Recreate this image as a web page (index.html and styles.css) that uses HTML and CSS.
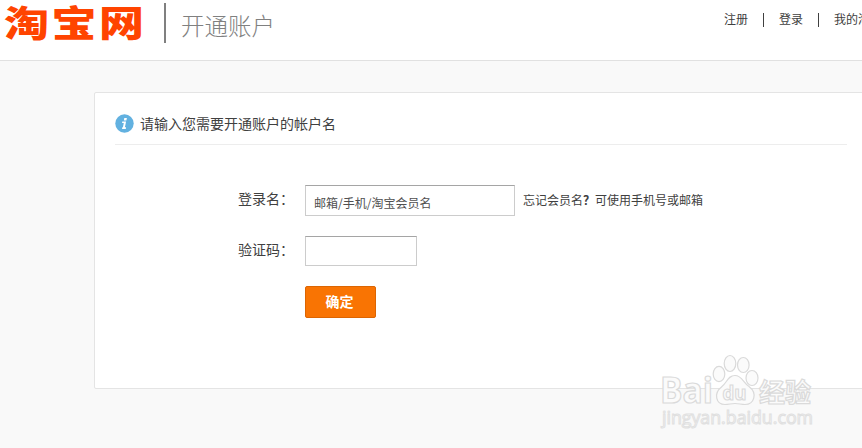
FILE: index.html
```html
<!DOCTYPE html>
<html lang="zh-CN">
<head>
    <meta charset="UTF-8">
    <title>开通账户</title>
    <link rel="stylesheet" href="styles.css">
</head>
<body>

    <!-- Header -->
    <div class="header">
        <svg class="logo" width="164" height="46" viewBox="0 0 164 46">
            <g transform="translate(4 36.5) scale(1.25 1)">
                <text x="0" y="0" textLength="112">淘宝网</text>
            </g>
        </svg>
        <h1 class="title">开通账户</h1>
        <ul class="site-nav">
            <li><a href="#">注册</a></li>
            <li><a href="#">登录</a></li>
            <li><a href="#">我的淘宝</a></li>
        </ul>
    </div>

    <!-- Account form -->
    <div class="panel">
        <div class="panel-title">
            <svg class="info" width="19" height="19" viewBox="0 0 19 19">
                <circle cx="9.5" cy="9.5" r="9.2" fill="#62b1e0"/>
                <path d="M9.3 4h2.6l-.5 2.4H8.8zM7.3 7.4h3.8L9.9 13.3h1.2l-.3 1.6H7l.3-1.6h.6L8.8 9H7z" fill="#fff"/>
            </svg>
            <span>请输入您需要开通账户的帐户名</span>
        </div>
        <form class="form">
            <div class="row">
                <label for="account">登录名：</label>
                <input type="text" id="account" class="account" value="邮箱/手机/淘宝会员名">
                <span class="tip">忘记会员名<b>？</b>可使用手机号或邮箱</span>
            </div>
            <div class="row">
                <label for="code">验证码：</label>
                <input type="text" id="code" class="code">
            </div>
            <button type="button" class="submit">确定</button>
        </form>
    </div>

    <!-- Watermark -->
    <svg class="watermark" width="170" height="88" viewBox="0 0 170 88">
        <g class="mark">
            <text class="latin" x="5" y="57" font-size="35" textLength="53" lengthAdjust="spacingAndGlyphs">Bai</text>
            <ellipse cx="64" cy="28" rx="5.8" ry="7.7"/>
            <ellipse cx="75" cy="17.5" rx="5.8" ry="8"/>
            <ellipse cx="88.3" cy="19" rx="5.8" ry="7.5"/>
            <ellipse cx="97" cy="32" rx="6" ry="7.5"/>
            <path d="M80 29.500c-7 0-8 7-13 11-9 7-6 18 3 18 4 0 6-1 10-1s6 1 10 1c9 0 13-11 4-18-6-4-7-11-14-11z"/>
            <text class="latin" x="67.500" y="54" font-size="20" textLength="24" lengthAdjust="spacingAndGlyphs">du</text>
            <text class="cjk" x="104" y="56" font-size="26" textLength="52">经验</text>
        </g>
        <text class="url" x="7" y="78" font-size="17.5" textLength="151" lengthAdjust="spacingAndGlyphs">jingyan.baidu.com</text>
    </svg>

</body>
</html>
```
FILE: styles.css
```css
body {
    margin: 0;
    height: 448px;
    overflow: hidden;
    background-color: #f9f9f9;
    color: #404040;
    font: 12px/18px "Noto Sans CJK SC", sans-serif;
}

/* Header */
.header {
    display: flex;
    height: 60px;
    background-color: #fff;
    border-bottom: 1px solid #e1e1e1;
}

.logo {
    flex: none;
    overflow: visible;
    fill: #ff4400;
}

.logo text {
    font-size: 36px;
    font-weight: 900;
}

.title {
    flex: none;
    box-sizing: border-box;
    width: 540px;
    height: 40px;
    margin: 3px 0 0;
    padding-left: 15px;
    border-left: 2px solid #808080;
    color: #808080;
    font-size: 23.5px;
    font-weight: 300;
    line-height: 44px;
}

.site-nav {
    display: flex;
    flex: none;
    margin: 13px 0 0 20px;
    padding: 0;
    list-style: none;
    line-height: 12px;
}

.site-nav li {
    height: 14px;
}

.site-nav li + li {
    margin-left: 15px;
    padding-left: 15px;
    border-left: 1px solid #404040;
}

.site-nav a {
    color: #404040;
    text-decoration: none;
}

/* Panel */
.panel {
    box-sizing: border-box;
    width: 774px;
    height: 297px;
    margin: 31px 0 0 94px;
    padding: 10px 20px;
    background-color: #fff;
    border: 1px solid #e4e4e4;
    border-radius: 2px;
}

.panel-title {
    display: flex;
    align-items: center;
    height: 41px;
    border-bottom: 1px solid #ededed;
    font-size: 14px;
}

.panel-title span {
    padding-bottom: 2px;
}

.info {
    margin-right: 6px;
}

.form {
    padding-top: 40px;
}

.row {
    display: flex;
    height: 31px;
    margin-bottom: 20px;
    line-height: 26px;
}

.row label {
    width: 67px;
    padding-left: 123px;
    font-size: 14px;
}

.row input {
    box-sizing: border-box;
    height: 31px;
    padding: 4px 8px 0;
    border: 1px solid #ccc;
    border-top-color: #a5a5a5;
    color: #505050;
    font: 12px "Noto Sans CJK SC", sans-serif;
    outline: none;
}

.row .account {
    width: 210px;
}

.row .code {
    width: 112px;
    height: 30px;
}

.tip {
    margin-left: 8px;
    line-height: 29px;
}

.submit {
    display: block;
    width: 71px;
    height: 32px;
    margin: -1px 0 0 190px;
    padding: 0 2px 2px 0;
    background-color: #f97403;
    border: 1px solid #dc6502;
    border-radius: 2px;
    color: #fff;
    font: bold 14px "Noto Sans CJK SC", sans-serif;
}

/* Watermark lies over the panel's lower edge */
.watermark {
    position: absolute;
    left: 655px;
    top: 346px;
    fill: #fbfbfb;
    stroke: #dadada;
    stroke-width: 1.2;
}

.mark .latin {
    font-family: "Open Sans", sans-serif;
    font-weight: 700;
}

.mark .cjk {
    font-weight: 700;
}

.url {
    font-family: "Open Sans", sans-serif;
    stroke: #e0e0e0;
    stroke-width: 1;
}
```
